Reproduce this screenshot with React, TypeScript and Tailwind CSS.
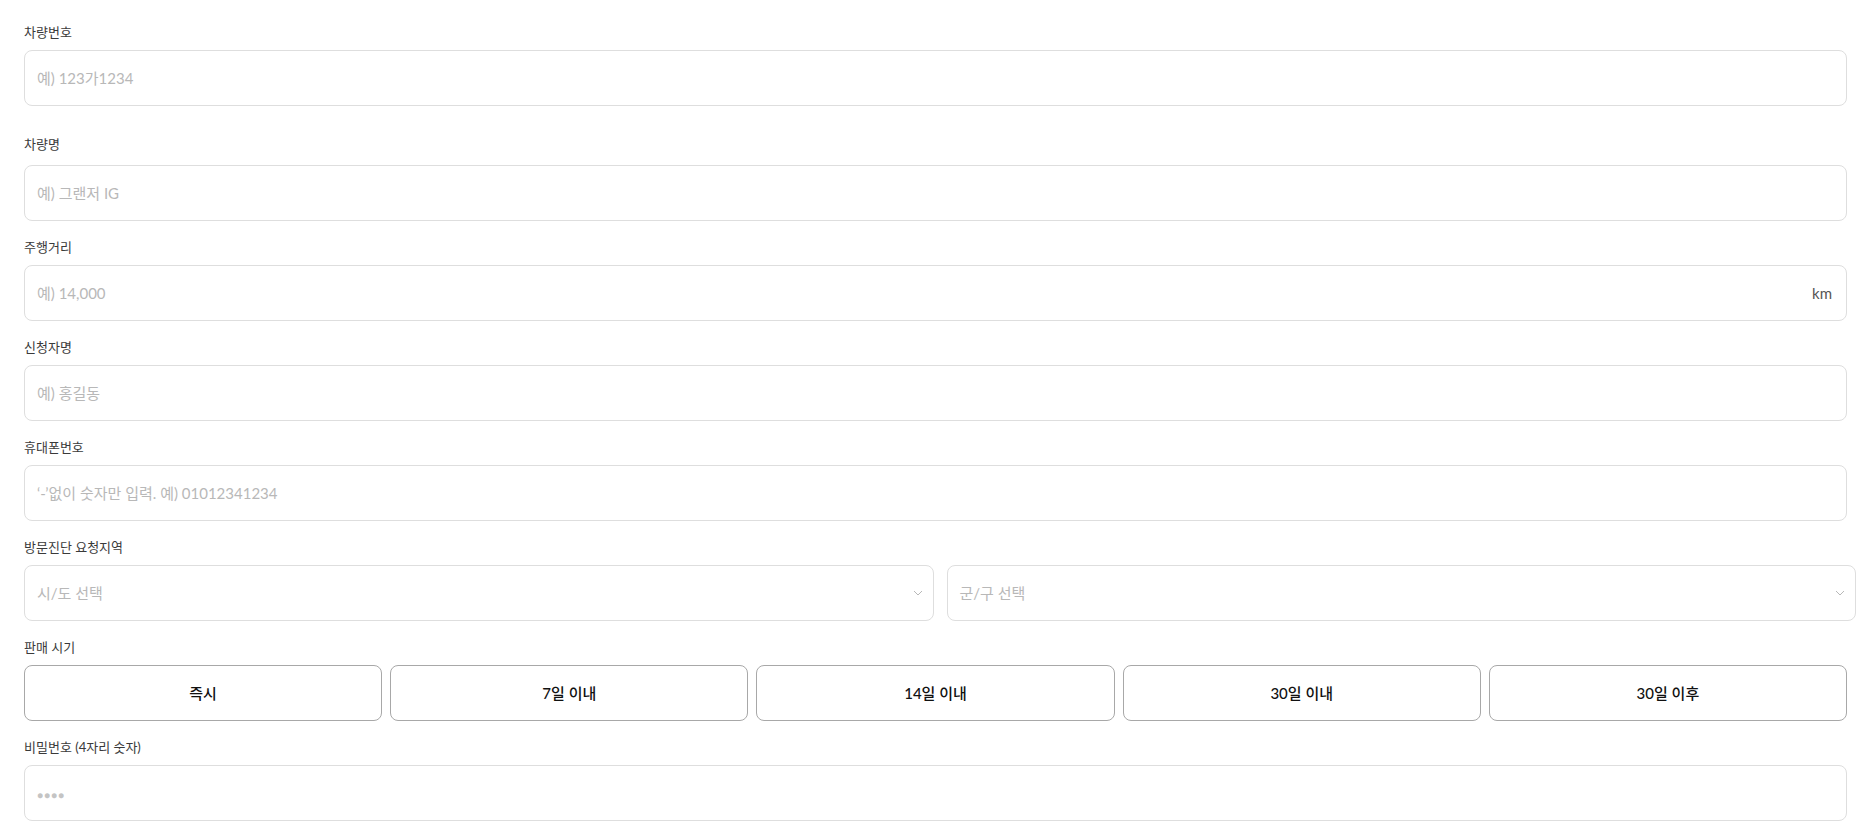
import { ReactNode } from 'react';

const FONT = "font-['Lato','Noto_Sans_CJK_KR',sans-serif]";

const PERIODS = ['즉시', '7일 이내', '14일 이내', '30일 이내', '30일 이후'];

function Field({
  label,
  children,
  className = 'mb-4',
  labelGap = 'mb-2',
}: {
  label: string;
  children: ReactNode;
  className?: string;
  labelGap?: string;
}) {
  return (
    <div className={className}>
      <div className={`text-[13px] leading-5 text-[#3a3a3a] ${labelGap}`}>{label}</div>
      {children}
    </div>
  );
}

function TextInput({ placeholder, suffix, small }: { placeholder: string; suffix?: string; small?: boolean }) {
  return (
    <div className="flex items-center h-14 rounded-lg border border-[#dedede] bg-white px-3">
      <input
        placeholder={placeholder}
        className={`flex-1 min-w-0 bg-transparent outline-none text-[15px] text-[#222] ${
          small ? 'placeholder:text-[10px] placeholder:tracking-[1px] placeholder:text-[#c4c4c4]' : 'placeholder:text-[#b8b8b8]'
        } ${FONT}`}
      />
      {suffix && <span className="text-[15px] text-[#555] pr-[2px]">{suffix}</span>}
    </div>
  );
}

function SelectBox({ placeholder }: { placeholder: string }) {
  return (
    <div className="flex items-center justify-between h-14 rounded-lg border border-[#dedede] bg-white pl-3 pr-[10px]">
      <span className="text-[15px] text-[#b8b8b8]">{placeholder}</span>
      <svg width="10" height="6" viewBox="0 0 10 6" fill="none" stroke="#b8b8b8" strokeWidth="1">
        <path d="M1 1l4 4 4-4" />
      </svg>
    </div>
  );
}

export default function App() {
  return (
    <div className={`w-full min-h-screen bg-white pl-6 pr-5 pt-[22px] ${FONT}`}>
      <Field label="차량번호" className="mb-7">
        <TextInput placeholder="예) 123가1234" />
      </Field>
      <Field label="차량명" labelGap="mb-[11px]">
        <TextInput placeholder="예) 그랜저 IG" />
      </Field>
      <Field label="주행거리">
        <TextInput placeholder="예) 14,000" suffix="km" />
      </Field>
      <Field label="신청자명">
        <TextInput placeholder="예) 홍길동" />
      </Field>
      <Field label="휴대폰번호">
        <TextInput placeholder="‘-’없이 숫자만 입력. 예) 01012341234" />
      </Field>
      <Field label="방문진단 요청지역">
        <div className="grid grid-cols-2 gap-[13px] w-[calc(100%+9px)]">
          <SelectBox placeholder="시/도 선택" />
          <SelectBox placeholder="군/구 선택" />
        </div>
      </Field>
      <Field label="판매 시기">
        <div className="grid grid-cols-5 gap-2">
          {PERIODS.map((p) => (
            <button
              key={p}
              className="h-14 rounded-lg border border-[#a8a8a8] bg-white text-[15px] font-medium text-[#111]"
            >
              {p}
            </button>
          ))}
        </div>
      </Field>
      <Field label="비밀번호 (4자리 숫자)">
        <TextInput placeholder="●●●●" small />
      </Field>
    </div>
  );
}
